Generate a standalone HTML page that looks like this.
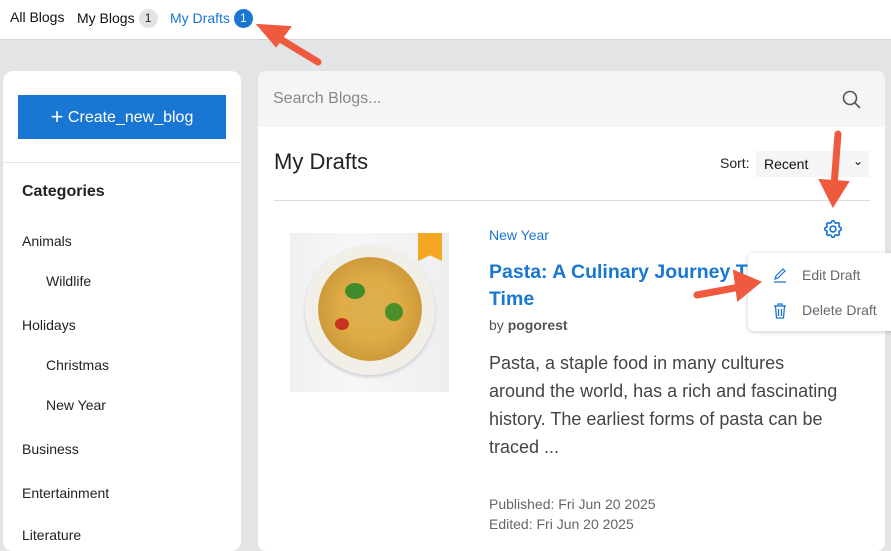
<!DOCTYPE html>
<html><head><style>
*{box-sizing:border-box;margin:0;padding:0}
body{width:891px;height:539px;overflow:hidden;background:#e2e4e6;font-family:"Liberation Sans",Arial,sans-serif;position:relative}
.top{position:absolute;left:0;top:0;width:891px;height:40px;background:#fff;border-bottom:1px solid #d4d6d8}
.tab{position:absolute;top:9px;font-size:14px;color:#111}
.badge{display:inline-block;width:19px;height:19px;border-radius:50%;text-align:center;line-height:19px;font-size:12px;margin-left:4px;vertical-align:1px}
.side{position:absolute;left:3px;top:71px;width:238px;height:480px;background:#fff;border-radius:10px}
.btn{position:absolute;left:15px;top:24px;width:208px;height:44px;background:#1976d2;color:#fff;font-size:16px;text-align:center;line-height:44px}
.cat{position:absolute;font-size:14px;color:#222}
.main{position:absolute;left:258px;top:71px;width:627px;height:480px;background:#fff;border-radius:8px;overflow:hidden}
.search{height:56px;background:#f5f5f5;color:#888;font-size:16px;padding:19px 0 0 15px;position:relative}
.abs{position:absolute}
</style></head><body>
<div class="top">
<span class="tab" style="left:10px">All Blogs</span>
<span class="tab" style="left:77px">My Blogs<span class="badge" style="background:#e3e3e3;color:#222">1</span></span>
<span class="tab" style="left:170px;color:#1976d2">My Drafts<span class="badge" style="background:#1976d2;color:#fff">1</span></span>
</div>
<div class="side">
<div class="btn"><span style="font-size:22px;vertical-align:-2px">+</span> Create_new_blog</div>
<div style="position:absolute;left:0;top:91px;width:238px;border-top:1px solid #e5e5e5"></div>
<div class="cat" style="left:19px;top:112px;font-weight:bold;font-size:16px">Categories</div>
<div class="cat" style="left:19px;top:162px">Animals</div>
<div class="cat" style="left:43px;top:202px">Wildlife</div>
<div class="cat" style="left:19px;top:246px">Holidays</div>
<div class="cat" style="left:43px;top:286px">Christmas</div>
<div class="cat" style="left:43px;top:326px">New Year</div>
<div class="cat" style="left:19px;top:370px">Business</div>
<div class="cat" style="left:19px;top:414px">Entertainment</div>
<div class="cat" style="left:19px;top:456px">Literature</div>
</div>
<div class="main">
<div class="search">Search Blogs...
<svg class="abs" style="left:584px;top:19px" width="20" height="20" viewBox="0 0 20 20"><circle cx="8" cy="8" r="6.5" fill="none" stroke="#555" stroke-width="1.6"/><line x1="13" y1="13" x2="18" y2="18" stroke="#555" stroke-width="1.6"/></svg></div>
<div class="abs" style="left:16px;top:78px;font-size:22px;color:#222">My Drafts</div>
<div class="abs" style="left:462px;top:84px;font-size:14px;color:#222">Sort:</div>
<div class="abs" style="left:498px;top:80px;width:113px;height:26px;background:#f5f5f5;font-size:14px;padding:5px 0 0 8px;color:#111">Recent<span style="position:absolute;right:6px;top:3px;font-size:12px">⌄</span></div>
<div class="abs" style="left:16px;top:129px;width:596px;border-top:1px solid #ddd"></div>
<div class="abs" style="left:32px;top:162px;width:159px;height:159px;background:linear-gradient(90deg,#eef0f2,#f6f7f8 40%,#eceef0)">
<div class="abs" style="left:15px;top:12px;width:130px;height:130px;border-radius:50%;background:#f2efe9;box-shadow:0 2px 3px #ccc"></div>
<div class="abs" style="left:28px;top:24px;width:104px;height:104px;border-radius:50%;background:radial-gradient(circle,#d9b04e 0,#e0ac48 40%,#cf9b3a 70%,#efe9df 72%)"></div>
<div class="abs" style="left:55px;top:50px;width:20px;height:16px;border-radius:50%;background:#3f8a2a"></div>
<div class="abs" style="left:95px;top:70px;width:18px;height:18px;border-radius:50%;background:#4a8f2a"></div>
<div class="abs" style="left:45px;top:85px;width:14px;height:12px;border-radius:50%;background:#c8321e"></div>
<div class="abs" style="left:128px;top:0;width:24px;height:28px;background:#f5a623;clip-path:polygon(0 0,100% 0,100% 100%,50% 80%,0 100%)"></div>
</div>
<div class="abs" style="left:231px;top:156px;font-size:14px;color:#1976d2">New Year</div>
<div class="abs" style="left:231px;top:188px;width:350px;font-size:19.5px;font-weight:bold;color:#1976d2;line-height:27px">Pasta: A Culinary Journey Through Time</div>
<div class="abs" style="left:231px;top:246px;font-size:14px;color:#555">by <b>pogorest</b></div>
<div class="abs" style="left:231px;top:278px;width:353px;font-size:18px;color:#444;line-height:28px">Pasta, a staple food in many cultures around the world, has a rich and fascinating history. The earliest forms of pasta can be traced ...</div>
<div class="abs" style="left:231px;top:423px;font-size:14px;color:#666;line-height:20px">Published: Fri Jun 20 2025<br>Edited: Fri Jun 20 2025</div>
<svg class="abs" style="left:564px;top:147px" width="22" height="22" viewBox="0 0 24 24" fill="none" stroke="#1976d2" stroke-width="1.8"><path d="M10.3 4.3c.4-1.8 2.9-1.8 3.4 0a1.7 1.7 0 0 0 2.6 1.1c1.5-.9 3.3.8 2.4 2.4a1.7 1.7 0 0 0 1 2.5c1.8.4 1.8 2.9 0 3.4a1.7 1.7 0 0 0-1 2.6c.9 1.5-.9 3.3-2.4 2.4a1.7 1.7 0 0 0-2.6 1c-.4 1.8-2.9 1.8-3.4 0a1.7 1.7 0 0 0-2.5-1c-1.6.9-3.3-.9-2.4-2.4a1.7 1.7 0 0 0-1.1-2.6c-1.8-.4-1.8-2.9 0-3.4a1.7 1.7 0 0 0 1.1-2.5c-.9-1.6.8-3.3 2.4-2.4a1.7 1.7 0 0 0 2.5-1.1z"/><circle cx="12" cy="12" r="3.2"/></svg>
</div>
<div class="abs" style="left:748px;top:253px;width:150px;height:78px;background:#fff;border-radius:6px;box-shadow:0 1px 5px rgba(0,0,0,.2)">
<svg class="abs" style="left:24px;top:14px" width="16" height="16" viewBox="0 0 16 16" fill="none" stroke="#1976d2" stroke-width="1.2"><path d="M3 12l1-3 7-7 2 2-7 7z M2 15h12"/></svg>
<div class="abs" style="left:54px;top:14px;font-size:14px;color:#666">Edit Draft</div>
<svg class="abs" style="left:25px;top:50px" width="14" height="16" viewBox="0 0 14 16" fill="none" stroke="#1976d2" stroke-width="1.3"><path d="M1 3h12M5 3V1h4v2M2.5 3l1 12h7l1-12M5.5 6v7M8.5 6v7"/></svg>
<div class="abs" style="left:54px;top:49px;font-size:14px;color:#666">Delete Draft</div>
</div>
<svg class="abs" style="left:0;top:0" width="891" height="539">
<g fill="#ef5a3e" stroke="#ef5a3e" stroke-linecap="round">
<line x1="318" y1="62" x2="272" y2="34" stroke-width="7"/><polygon points="258,25 290,27 276,46" stroke-width="2"/>
<line x1="838" y1="134" x2="834" y2="186" stroke-width="7"/><polygon points="833,206 820,180 848,182" stroke-width="2"/>
<line x1="697" y1="295" x2="740" y2="287" stroke-width="7"/><polygon points="760,282 734,271 738,300" stroke-width="2"/>
</g></svg>
</body></html>
